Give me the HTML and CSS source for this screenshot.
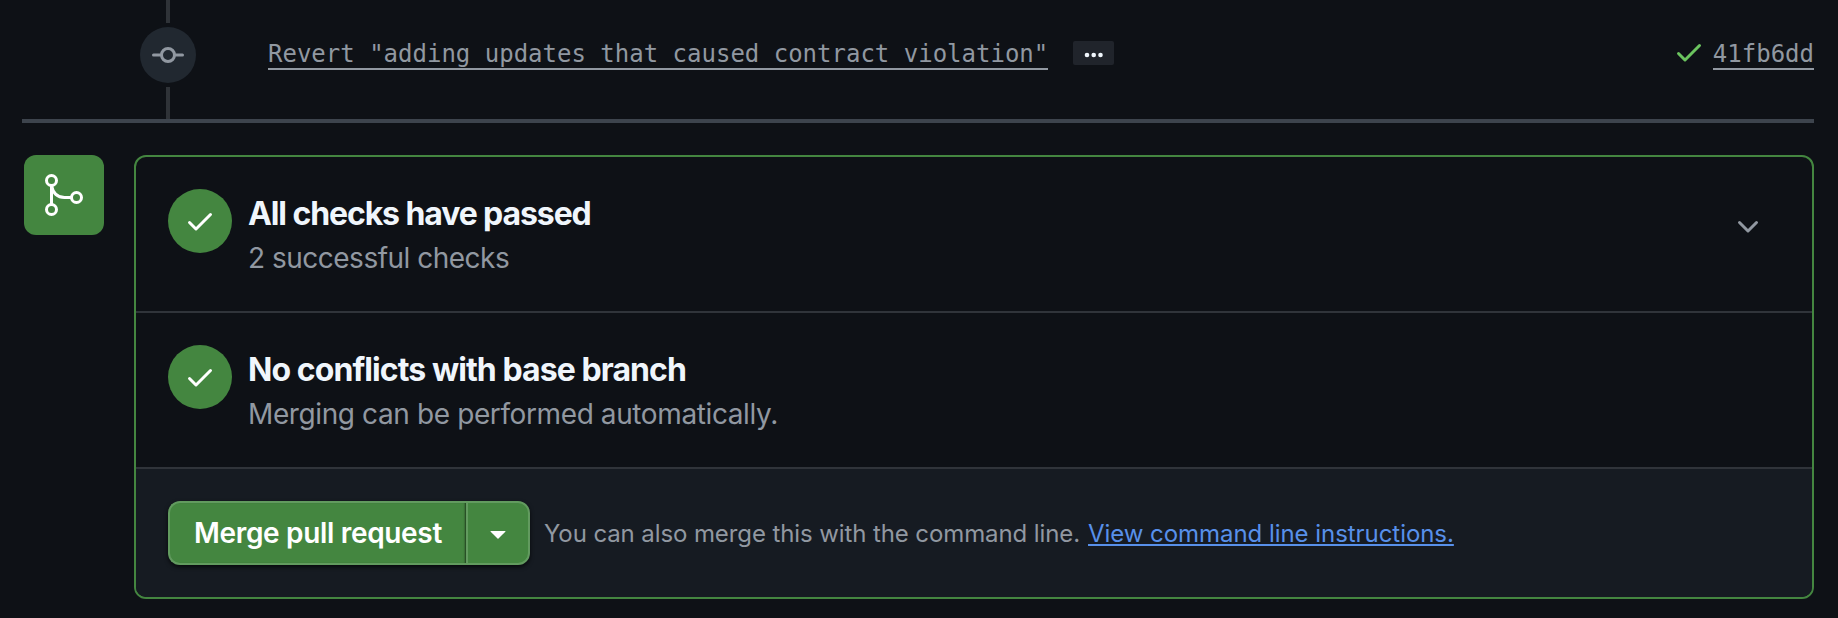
FILE: index.html
```html
<!DOCTYPE html>
<html lang="en">
<head>
<meta charset="utf-8">
<title>Pull request</title>
<link rel="stylesheet" href="styles.css">
</head>
<body>
<section class="timeline">
  <div class="rail">
    <div class="rail-line rail-top"></div>
    <div class="commit-badge">
      <svg width="32" height="32" viewBox="0 0 32 32" fill="none" stroke="currentColor" stroke-width="3" stroke-linecap="round"><circle cx="16" cy="16" r="6.5"/><path d="M1.5 16H8.5M23.5 16H30.5"/></svg>
    </div>
    <div class="rail-line rail-bottom"></div>
  </div>
  <div class="commit-row">
    <a class="commit-link">Revert "adding updates that caused contract violation"</a>
    <button class="ellipsis" aria-label="Show more"><svg width="20" height="6" viewBox="0 0 20 6" fill="currentColor"><circle cx="3" cy="3" r="2.3"/><circle cx="9.7" cy="3" r="2.3"/><circle cx="16.5" cy="3" r="2.3"/></svg></button>
    <svg class="commit-ok" width="32" height="32" viewBox="0 0 16 16" fill="currentColor"><path d="M13.78 4.22a.75.75 0 0 1 0 1.06l-7.25 7.25a.75.75 0 0 1-1.06 0L2.22 9.28a.75.75 0 0 1 1.06-1.06L6 10.94l6.72-6.72a.75.75 0 0 1 1.06 0Z"/></svg>
    <a class="commit-link">41fb6dd</a>
  </div>
</section>
<section class="merge">
  <div class="merge-badge">
    <svg width="48" height="48" viewBox="0 0 48 48" fill="none" stroke="currentColor" stroke-width="3"><circle cx="11.5" cy="9.5" r="5"/><circle cx="11.5" cy="38.5" r="5"/><circle cx="36.5" cy="26.5" r="5"/><path d="M11.5 14.5V33.5M11.5 14.5C13 22 17 26.5 24.500 26.500H31.500"/></svg>
  </div>
  <div class="merge-box">
    <div class="status">
      <div class="status-icon"><svg width="32" height="32" viewBox="0 0 16 16" fill="currentColor"><path d="M13.78 4.22a.75.75 0 0 1 0 1.06l-7.25 7.25a.75.75 0 0 1-1.06 0L2.22 9.28a.75.75 0 0 1 1.06-1.06L6 10.94l6.72-6.72a.75.75 0 0 1 1.06 0Z"/></svg></div>
      <div class="status-text">
        <h3 class="checks-title">All checks have passed</h3>
        <p class="checks-note">2 successful checks</p>
      </div>
      <svg class="chevron" width="32" height="32" viewBox="0 0 16 16" fill="currentColor"><path d="M12.78 5.22a.749.749 0 0 1 0 1.06l-4.25 4.25a.749.749 0 0 1-1.06 0L3.22 6.28a.749.749 0 1 1 1.06-1.06L8 8.939l3.72-3.719a.749.749 0 0 1 1.060 0Z"/></svg>
    </div>
    <div class="status">
      <div class="status-icon"><svg width="32" height="32" viewBox="0 0 16 16" fill="currentColor"><path d="M13.78 4.22a.75.75 0 0 1 0 1.06l-7.25 7.25a.75.75 0 0 1-1.06 0L2.22 9.28a.75.75 0 0 1 1.06-1.06L6 10.94l6.72-6.72a.75.75 0 0 1 1.06 0Z"/></svg></div>
      <div class="status-text">
        <h3 class="conflict-title">No conflicts with base branch</h3>
        <p class="conflict-note">Merging can be performed automatically.</p>
      </div>
    </div>
    <div class="actions">
      <div class="button-group">
        <button class="btn btn-main"><span>Merge pull request</span></button>
        <button class="btn btn-caret" aria-label="Select merge method"><svg width="16" height="8" viewBox="0 0 16 8" fill="currentColor"><path d="M.9 0H15.100Q15.900.1 15.300.8L8.500 7.600Q8 8 7.500 7.600L.7.8Q.1.1.9 0Z"/></svg></button>
      </div>
      <p class="hint"><span class="hint-text">You can also merge this with the command line.</span><a class="hint-link">View command line instructions.</a></p>
    </div>
  </div>
</section>
</body>
</html>
```
FILE: styles.css
```css
* { box-sizing: border-box; }
body {
  margin: 0;
  height: 618px;
  overflow: hidden;
  background: #0e1116;
  color: #9198a1;
  font-family: Inter, "Liberation Sans", sans-serif;
}
h3, p { margin: 0; font-weight: 400; white-space: nowrap; }
button { padding: 0; border: 0; font: inherit; color: inherit; }
svg { display: block; flex: none; }

.timeline {
  display: flex;
  height: 123px;
  margin: 0 24px 0 22px;
  padding-left: 118px;
  border-bottom: 4px solid #3d444d;
}
.rail { display: flex; flex-direction: column; align-items: center; width: 56px; }
.rail-line { width: 4px; background: #2f3338; }
.rail-top { height: 23px; }
.rail-bottom { height: 32px; }
.commit-badge {
  display: grid;
  place-items: center;
  width: 56px;
  height: 56px;
  margin: 4px 0;
  padding-bottom: 1px;
  border-radius: 50%;
  background: #212830;
}
.commit-row { display: flex; align-items: flex-start; flex: 1; padding: 40px 0 0 72px; }
.commit-link {
  height: 30px;
  border-bottom: 2px solid #9198a1;
  font: 24px/28px "DejaVu Sans Mono", monospace;
  white-space: nowrap;
}
.ellipsis {
  display: grid;
  place-items: center;
  width: 41px;
  height: 24px;
  margin: 1px 0 0 25px;
  padding-top: 4px;
  border-radius: 2px;
  background: #20242b;
  color: #f0f6fc;
}
.commit-ok { margin: -4px 8px 0 auto; color: #6bc45f; }

.merge { display: flex; gap: 30px; padding: 32px 24px 0; }
.merge-badge {
  display: grid;
  place-items: center;
  width: 80px;
  height: 80px;
  border-radius: 12px;
  background: #448640;
  color: #fff;
}
.merge-box {
  flex: 1;
  height: 444px;
  overflow: hidden;
  border: 2px solid #448640;
  border-radius: 12px;
}
.status {
  display: flex;
  height: 156px;
  padding: 32px 48px 0 32px;
  border-bottom: 2px solid #30343a;
}
.status-icon {
  display: grid;
  place-items: center;
  width: 64px;
  height: 64px;
  border-radius: 50%;
  background: #448640;
  color: #fff;
}
.status-text { flex: 1; padding: 4px 0 0 16px; }
.status h3 { color: #f0f6fc; font-size: 32px; font-weight: 650; line-height: 42px; }
.status p { font-size: 28px; line-height: 42px; padding-top: 2px; }
.status .checks-title { letter-spacing: -1.1px; }
.status .conflict-title { letter-spacing: -0.92px; }
.checks-note { letter-spacing: -0.5px; }
.conflict-note { letter-spacing: -0.39px; }
.chevron { margin: 21.500px 0 0; }
.actions {
  display: flex;
  align-items: center;
  height: 128px;
  padding: 0 32px;
  background: #161b22;
}
.button-group { display: flex; border-radius: 12px; box-shadow: 0 2px 4px rgba(0, 0, 0, .7); }
.btn {
  display: grid;
  place-items: center;
  height: 64px;
  border: 2px solid #629b5f;
  background: #448640;
  color: #fff;
}
.btn-main {
  width: 298px;
  border-right: 0;
  border-radius: 12px 0 0 12px;
  box-shadow: inset -2px 0 2px -1px rgba(0, 0, 0, .55);
  font-size: 28px;
  font-weight: 600;
  letter-spacing: -0.33px;
  white-space: nowrap;
}
.btn-caret { width: 64px; padding-top: 4px; border-radius: 0 12px 12px 0; }
.hint { display: flex; align-items: center; padding: 2px 0 0 14px; font-size: 24px; line-height: 30px; }
.hint-text { margin-right: 8px; letter-spacing: -0.1px; }
.hint-link { letter-spacing: -0.05px; color: #5890ea; text-decoration: underline; text-decoration-thickness: 2px; text-underline-offset: 2px; text-decoration-skip-ink: none; }
```
